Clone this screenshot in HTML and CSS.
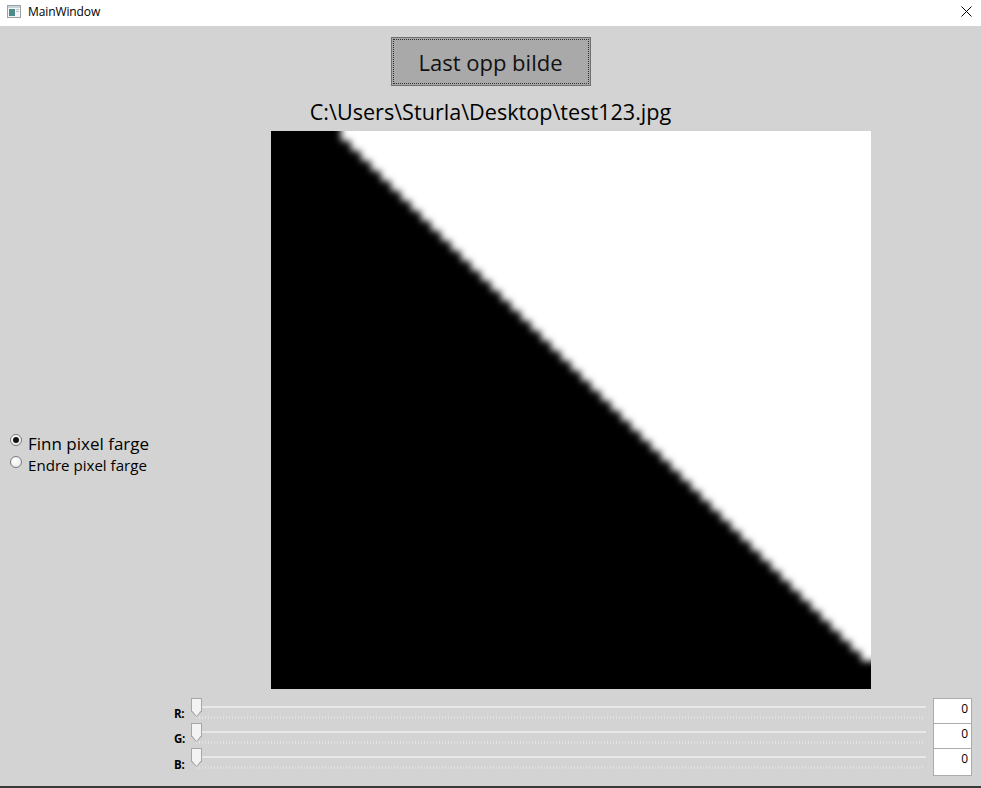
FILE: index.html
```html
<!DOCTYPE html>
<html>
<head>
<meta charset="utf-8">
<link rel="stylesheet" href="styles.css">
</head>
<body>
<div class="window">
  <div class="titlebar">
    <svg class="app-icon" width="14" height="13" viewBox="0 0 14 13">
      <rect x="0.5" y="0.5" width="13" height="12" fill="#f4f4f4" stroke="#9aa3a8"/>
      <rect x="1" y="1" width="12" height="2" fill="#c9d3d6"/>
      <rect x="2" y="4" width="6" height="7" fill="#4f8a8b"/>
      <rect x="9" y="4" width="3" height="1" fill="#b8c2c6"/>
      <rect x="9" y="6" width="3" height="1" fill="#b8c2c6"/>
    </svg>
    <span class="title">MainWindow</span>
    <svg class="close" width="11" height="11" viewBox="0 0 11 11">
      <path d="M0.5 0.5 L10.5 10.5 M10.5 0.5 L0.5 10.5" stroke="#000" stroke-width="1"/>
    </svg>
  </div>
  <div class="client">
    <div class="top">
      <button class="upload"><span class="focus">Last opp bilde</span></button>
      <div class="path">C:\Users\Sturla\Desktop\test123.jpg</div>
    </div>
    <div class="middle">
      <div class="modes">
        <label class="radio big"><span class="dot checked"></span>Finn pixel farge</label>
        <label class="radio small"><span class="dot"></span>Endre pixel farge</label>
      </div>
      <svg class="picture" width="600" height="558" viewBox="0 0 600 558">
        <defs>
          <filter id="soft" x="-10%" y="-10%" width="120%" height="120%">
            <feGaussianBlur stdDeviation="3.8"/>
          </filter>
        </defs>
        <rect width="600" height="558" fill="#ffffff"/>
        <path filter="url(#soft)" fill="#000" d="M-20 -20 H70 V10 H80 V20 H90 V30 H100 V40 H110 V50 H120 V60 H130 V70 H140 V80 H150 V90 H160 V100 H170 V110 H180 V120 H190 V130 H200 V140 H210 V150 H220 V160 H230 V170 H240 V180 H250 V190 H260 V200 H270 V210 H280 V220 H290 V230 H300 V240 H310 V250 H320 V260 H330 V270 H340 V280 H350 V290 H360 V300 H370 V310 H380 V320 H390 V330 H400 V340 H410 V350 H420 V360 H430 V370 H440 V380 H450 V390 H460 V400 H470 V410 H480 V420 H490 V430 H500 V440 H510 V450 H520 V460 H530 V470 H540 V480 H550 V490 H560 V500 H570 V510 H580 V520 H590 V530 H620 V580 H-20 Z"/>
      </svg>
    </div>
    <div class="sliders">
      <div class="row">
        <span class="lbl">R:</span>
        <div class="slider"><span class="track"></span><span class="ticks"></span><span class="thumb"></span></div>
        <div class="value">0</div>
      </div>
      <div class="row">
        <span class="lbl">G:</span>
        <div class="slider"><span class="track"></span><span class="ticks"></span><span class="thumb"></span></div>
        <div class="value">0</div>
      </div>
      <div class="row last">
        <span class="lbl">B:</span>
        <div class="slider"><span class="track"></span><span class="ticks"></span><span class="thumb"></span></div>
        <div class="value">0</div>
      </div>
    </div>
  </div>
  <div class="bottom-edge"></div>
</div>
</body>
</html>
```
FILE: styles.css
```css
* { box-sizing: border-box; }
html, body { margin: 0; padding: 0; }
body {
  width: 981px;
  height: 788px;
  overflow: hidden;
  font-family: "Open Sans", "Noto Sans", "DejaVu Sans", sans-serif;
  color: #000;
}
.window {
  width: 981px;
  height: 788px;
  display: flex;
  flex-direction: column;
  background: #d3d3d3;
}
.titlebar {
  height: 26px;
  background: #fff;
  display: flex;
  align-items: center;
  padding-left: 7px;
  flex: none;
}
.app-icon { margin-top: -3px; }
.title {
  font-size: 12px;
  margin-left: 7px;
  margin-top: -3px;
  letter-spacing: -0.1px;
}
.close { margin-left: auto; margin-right: 9px; margin-top: -4px; }
.client {
  flex: 1;
  display: flex;
  flex-direction: column;
}
.top {
  display: flex;
  flex-direction: column;
  align-items: center;
  padding-top: 11px;
}
.upload {
  width: 200px;
  height: 49px;
  background: #a9a9a9;
  border: 1px solid #707070;
  padding: 1px;
  margin: 0;
  font-family: inherit;
  display: flex;
}
.upload .focus {
  flex: 1;
  border: 1px dotted #303030;
  display: flex;
  align-items: center;
  justify-content: center;
  font-size: 22px;
  color: #111;
  padding-top: 1px;
}
.path {
  font-size: 21.6px;
  height: 45px;
  line-height: 30px;
  padding-top: 11px;
}
.middle {
  display: flex;
  height: 558px;
}
.modes {
  width: 271px;
  display: flex;
  flex-direction: column;
  padding-top: 301px;
  padding-left: 10px;
}
.radio {
  display: flex;
  align-items: center;
  white-space: nowrap;
}
.radio.big { font-size: 17px; height: 22px; }
.radio.small { font-size: 15.1px; height: 22px; }
.dot {
  width: 12px;
  height: 12px;
  border-radius: 50%;
  border: 1px solid #7a7a7a;
  background: radial-gradient(circle at 40% 35%, #ffffff 0%, #f0f0f0 60%, #dcdcdc 100%);
  margin-right: 6px;
  margin-top: -6px;
  position: relative;
  flex: none;
}
.dot.checked::after {
  content: "";
  position: absolute;
  left: 2px;
  top: 2px;
  width: 6px;
  height: 6px;
  border-radius: 50%;
  background: #111;
}
.picture { display: block; flex: none; }
.sliders {
  display: flex;
  flex-direction: column;
  padding-top: 10px;
  padding-left: 172px;
  padding-right: 9px;
}
.row {
  display: flex;
  align-items: stretch;
  height: 25px;
}
.row.last { height: 27px; }
.lbl {
  width: 18px;
  font-size: 11.5px;
  font-weight: bold;
  display: flex;
  align-items: center;
  padding-left: 2px;
  padding-top: 3px;
  letter-spacing: -0.3px;
}
.slider {
  flex: 1;
  position: relative;
  margin-right: 6px;
}
.track {
  position: absolute;
  left: 4px;
  right: 1px;
  top: 7px;
  height: 2px;
  background: #e8e8e8;
}
.ticks {
  position: absolute;
  left: 6px;
  right: 2px;
  top: 17px;
  height: 3px;
  background: repeating-linear-gradient(to right, #e2e2e2 0px, #e2e2e2 1px, transparent 1px, transparent 3px);
}
.thumb {
  position: absolute;
  left: 1px;
  top: -1px;
  width: 11px;
  height: 19px;
  background: #a6a6a6;
  clip-path: polygon(0 0, 100% 0, 100% 70%, 50% 100%, 0 70%);
}
.thumb::before {
  content: "";
  position: absolute;
  inset: 1px;
  background: #f3f3f3;
  clip-path: polygon(0 0, 100% 0, 100% 68%, 50% 100%, 0 68%);
}
.value {
  width: 39px;
  background: #fff;
  border: 1px solid #acacac;
  font-size: 12px;
  text-align: right;
  padding-right: 3px;
  padding-top: 1px;
  margin-top: -1px;
}
.bottom-edge {
  height: 2px;
  background: #3a3a3a;
  flex: none;
  margin-top: auto;
}
```
